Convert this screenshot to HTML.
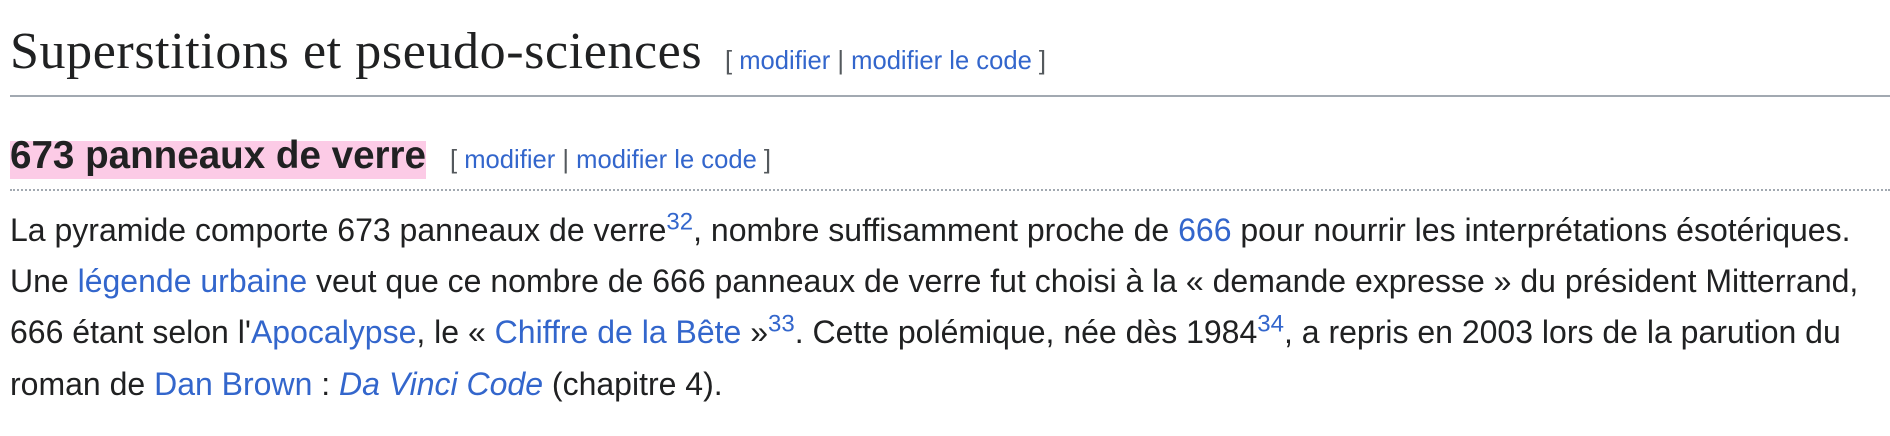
<!DOCTYPE html>
<html><head><meta charset="utf-8"><style>
html,body{margin:0;padding:0;background:#fff;width:1890px;height:436px;overflow:hidden}
body{font-family:"Liberation Sans",Arial,sans-serif;color:#202122;position:relative}
a{color:#3366cc;text-decoration:none}
.h2{position:absolute;left:10px;top:17px;font-family:"Liberation Serif",serif;font-size:52px;line-height:70px;white-space:nowrap;letter-spacing:0.6px}
.es{position:absolute;font-size:25.6px;line-height:38px;color:#54595d;white-space:nowrap}
.hr{position:absolute;left:10px;right:0;top:95px;height:2px;background:#a2a9b1}
.t{position:absolute;left:10px;top:141px;height:38px;line-height:29px;font-size:38.6px;font-weight:bold;background:#fccbe6;white-space:nowrap}
.dot{position:absolute;left:10px;right:0;top:189px;border-top:2px dotted #a2a9b1}
.p{position:absolute;left:10px;top:205px;font-size:32px;line-height:51.2px;white-space:nowrap}
sup{font-size:24px;line-height:0;vertical-align:super}
</style></head><body>
<div class="h2">Superstitions et pseudo-sciences</div>
<div class="es" style="left:725px;top:42px">[ <a>modifier</a> | <a>modifier le code</a> ]</div>
<div class="hr"></div>
<div class="t">673 panneaux de verre</div>
<div class="es" style="left:450px;top:141px">[ <a>modifier</a> | <a>modifier le code</a> ]</div>
<div class="dot"></div>
<div class="p">
<div>La pyramide comporte 673 panneaux de verre<sup><a>32</a></sup>, nombre suffisamment proche de <a>666</a> pour nourrir les interprétations ésotériques.</div>
<div>Une <a>légende urbaine</a> veut que ce nombre de 666 panneaux de verre fut choisi à la « demande expresse » du président Mitterrand,</div>
<div>666 étant selon l'<a>Apocalypse</a>, le « <a>Chiffre de la Bête</a> »<sup><a>33</a></sup>. Cette polémique, née dès 1984<sup><a>34</a></sup>, a repris en 2003 lors de la parution du</div>
<div>roman de <a>Dan Brown</a> : <i><a>Da Vinci Code</a></i> (chapitre 4).</div>
</div>
</body></html>
